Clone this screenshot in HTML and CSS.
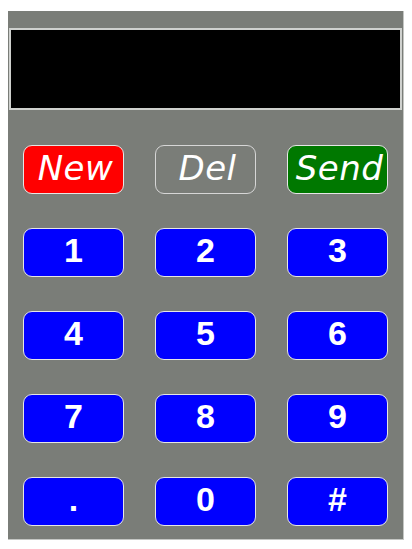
FILE: index.html
```html
<!DOCTYPE html>
<html>
<head>
<meta charset="utf-8">
<link rel="stylesheet" href="styles.css">
</head>
<body>
<div class="panel">
  <div class="display"></div>
  <div class="keys">
    <div class="key cmd new">New</div>
    <div class="key cmd del">Del</div>
    <div class="key cmd send">Send</div>
    <div class="key num">1</div>
    <div class="key num">2</div>
    <div class="key num">3</div>
    <div class="key num">4</div>
    <div class="key num">5</div>
    <div class="key num">6</div>
    <div class="key num">7</div>
    <div class="key num">8</div>
    <div class="key num">9</div>
    <div class="key num">.</div>
    <div class="key num">0</div>
    <div class="key num">#</div>
  </div>
</div>
</body>
</html>
```
FILE: styles.css
```css
html, body {
  margin: 0;
  padding: 0;
  background: #ffffff;
}
body {
  padding: 11px 0 0 8px;
}
.panel {
  box-sizing: border-box;
  width: 396px;
  height: 529px;
  background: #7a7d78;
  border-right: 1px solid #c4c6c3;
  border-bottom: 1px solid #c4c6c3;
  padding: 17px 0 0 1px;
}
.display {
  box-sizing: border-box;
  width: 393px;
  height: 82px;
  background: #000;
  border: 2px solid #cfd1ce;
}
.keys {
  display: grid;
  grid-template-columns: repeat(3, 101px);
  grid-auto-rows: 49px;
  column-gap: 31px;
  row-gap: 34px;
  margin: 35px 0 0 14px;
}
.key {
  box-sizing: border-box;
  border: 1px solid #e6e6e6;
  border-radius: 9px;
  display: flex;
  align-items: center;
  justify-content: center;
  color: #fff;
}
.cmd {
  font-family: "DejaVu Sans", sans-serif;
  font-style: italic;
  font-size: 34px;
  letter-spacing: 0.5px;
  padding: 0 0 4px 4px;
}
.new { background: #ff0000; }
.del { background: transparent; border-color: #d6d6d6; }
.send { background: #007800; }
.num {
  background: #0000ff;
  font-family: "Liberation Sans", Arial, sans-serif;
  font-weight: bold;
  font-size: 34px;
  padding-bottom: 4px;
}
```
